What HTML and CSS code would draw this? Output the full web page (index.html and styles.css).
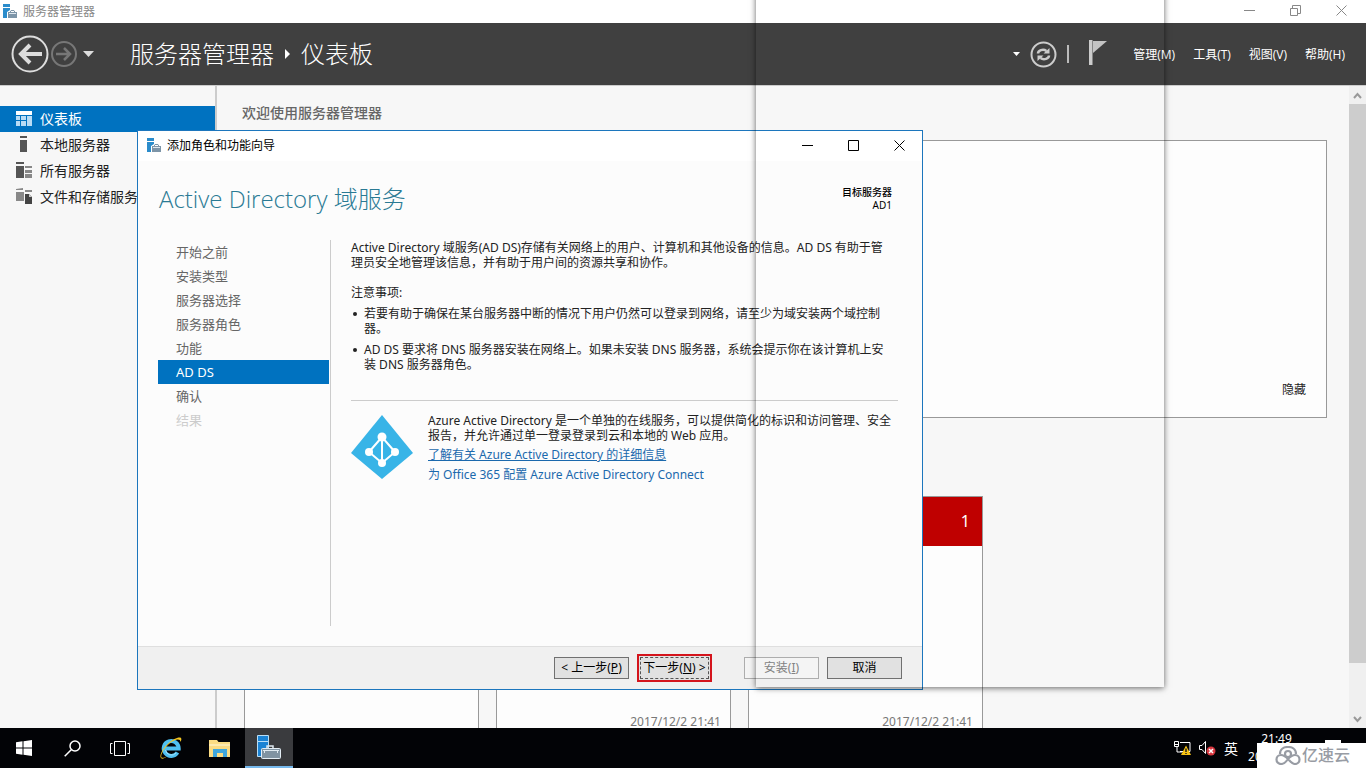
FILE: index.html
```html
<!DOCTYPE html>
<html lang="zh-CN">
<head>
<meta charset="utf-8">
<title>服务器管理器</title>
<link rel="stylesheet" href="styles.css">
</head>
<body>
<svg class="defs" aria-hidden="true">
  <symbol id="srv" viewBox="0 0 15 15">
    <path fill="#2b8ccb" d="M0 0h7v3H0zM0 4h7v2L4 8v6H0z"/>
    <path fill="none" stroke="#7d95a8" d="M7 8.500l1-2h3l1 2"/>
    <path fill="#7d95a8" d="M5 8h9v6H5z"/>
    <path fill="#dde6ee" d="M6 9h7v1H6z"/>
  </symbol>
</svg>
<div class="desktop">
  <header class="titlebar">
    <svg class="app-icon" width="15" height="15"><use href="#srv"/></svg>
    <span class="app-title">服务器管理器</span>
    <div class="win-controls win-controls-main">
      <button aria-label="最小化"><svg width="11" height="11"><path d="M0 5.500h11"/></svg></button>
      <button aria-label="还原"><svg width="11" height="11"><path d="M.5 3.500h7v7h-7zM2.500 3.500v-3h8v8h-3"/></svg></button>
      <button aria-label="关闭"><svg width="11" height="11"><path d="M.5.5l10 10M10.500.5l-10 10"/></svg></button>
    </div>
  </header>

  <div class="banner">
    <div class="history">
      <button aria-label="后退"><svg width="38" height="38"><circle cx="19" cy="19" r="17.500" fill="none" stroke="#ddd" stroke-width="2"/><path d="M31 19H10M19 10l-9 9 9 9" fill="none" stroke="#ddd" stroke-width="4"/></svg></button>
      <button aria-label="前进"><svg width="27" height="27"><circle cx="13" cy="13" r="12" fill="none" stroke="#777" stroke-width="2"/><path d="M5 13h14M13 7l6 6-6 6" fill="none" stroke="#777" stroke-width="2.500"/></svg></button>
      <button aria-label="历史记录"><svg width="11" height="6"><path d="M0 0h11L5.500 6z" fill="#ddd"/></svg></button>
    </div>
    <h1 class="crumbs"><span>服务器管理器</span><svg width="5" height="10"><path d="M0 0l5 5-5 5z" fill="#fff"/></svg><span>仪表板</span></h1>
    <div class="tools">
      <button aria-label="更多"><svg width="7" height="4"><path d="M0 0h7L3.500 4z" fill="#fff"/></svg></button>
      <button aria-label="刷新"><svg width="27" height="27"><circle cx="13.500" cy="13.500" r="12" fill="none" stroke="#ccc" stroke-width="2"/><path d="M8 12.500c0-3 5-5 8.500-2.500M19 14.500c0 3-5 5-8.500 2.500" fill="none" stroke="#ccc" stroke-width="2.500"/><path d="M13.500 12.500h6V7zM13.500 14.500h-6V20z" fill="#ccc"/></svg></button>
      <span class="rule"></span>
      <button aria-label="通知" class="flag"><svg width="18" height="25"><path d="M0 0h3.500v25H0z" fill="#ccc"/><path d="M4 1h14L4 13z" fill="#c4c4c4"/></svg></button>
      <nav class="menus"><button>管理(M)</button><button>工具(T)</button><button>视图(V)</button><button>帮助(H)</button></nav>
    </div>
  </div>

  <div class="workspace">
    <nav class="sidebar">
      <a href="#dash" class="current"><svg width="16" height="15" fill="#fff"><path d="M0 0h16v4H0z"/><path fill="#b9dcf5" d="M0 5h4v4H0zM0 10h4v5H0zM5 5h5v4H5zM5 10h5v5H5zM11 5h5v10h-5z"/></svg>仪表板</a>
      <a href="#local"><svg width="16" height="16" fill="#555"><path d="M4 0h7v2H4zM4 4h7v12H4z"/></svg>本地服务器</a>
      <a href="#all"><svg width="16" height="16"><path d="M0 0h8v2H0zM0 4h8v12H0z" fill="#555"/><path d="M9 4h7v2H9zM9 8h7v3H9zM9 12h7v4H9z" fill="#888"/></svg>所有服务器</a>
      <a href="#files"><svg width="16" height="16"><path d="M0 1l7-1v2H0zM0 4h8v9H0zM9 2h7v2H9z" fill="#888"/><path d="M9 6h4l3 3v7H9z" fill="#444"/><path d="M13 6l3 3h-3z" fill="#ccc"/></svg>文件和存储服务</a>
    </nav>
    <main class="dashboard">
      <h2>欢迎使用服务器管理器</h2>
      <section class="welcome"><button>隐藏</button></section>
      <div class="tiles">
        <article class="tile"></article>
        <article class="tile"><time>2017/12/2 21:41</time></article>
        <article class="tile"><div class="alert">1</div><time>2017/12/2 21:41</time></article>
      </div>
    </main>
    <div class="scrollbar">
      <svg width="9" height="18"><path d="M1 12l3.500-4L8 12"/></svg>
      <div class="thumb"></div>
      <svg width="9" height="18"><path d="M1 7l3.500 4L8 7"/></svg>
    </div>
  </div>

  <footer class="taskbar">
    <button aria-label="开始"><svg width="16" height="16" fill="#fff"><path d="M0 2.200l6.500-.9v6.200H0zM7.500 1.200L16 0v7.500H7.500zM0 8.500h6.500v6.200L0 13.800zM7.500 8.500H16V16l-8.500-1.200z"/></svg></button>
    <button aria-label="搜索"><svg width="17" height="17" fill="none" stroke="#fff" stroke-width="1.500"><circle cx="11" cy="6" r="5"/><path d="M7.500 9.500L.7 16.300"/></svg></button>
    <button aria-label="任务视图"><svg width="20" height="15" fill="none" stroke="#fff"><path d="M4.500.5h11v14h-11zM2.500 2.500h-2v10h2M17.500 2.500h2v10h-2"/></svg></button>
    <div class="pinned">
      <button aria-label="Internet Explorer"><svg width="24" height="24"><path d="M18.500 16.500A7.500 7.500 0 1 1 19.700 12.500H6" fill="none" stroke="#4fc0f0" stroke-width="4"/><path d="M17 17a6 6 0 0 1-10.500-3" fill="none" stroke="#a8e4fb" stroke-width="1"/><path d="M2 22C-1 19 8 5 18 2c5-1.500 5 1 3.500 4C21.500 2 16 3 11 7 5 12 1 19 2.500 21.500c1 .8 3 .2 5-1C5.500 22.500 3 23.300 2 22z" fill="#f5c722"/></svg></button>
      <button aria-label="文件资源管理器"><svg width="22" height="19"><path d="M0 1h8l1.500 2H21v15H0z" fill="#fbdc83"/><path d="M0 5h21v2H0z" fill="#fdeab0"/><path d="M4 18v-8h14v8h-4v-4H8v4z" fill="#3ea6dc"/></svg></button>
      <button aria-label="服务器管理器" class="running"><svg width="24" height="24"><path d="M.5.500h11v6H.5zM.5 6.500h11v15H.5z" fill="#1b83d4" stroke="#b9def7"/><path d="M10 13v-2h6v2" fill="none" stroke="#dfe9f0" stroke-width="1.500"/><rect x="4.500" y="13.500" width="19" height="10" rx="1" fill="#8093a2" stroke="#e3edf4"/><path d="M6 15.500h16M7.500 15v3M20.500 15v3" stroke="#dfe9f0"/></svg></button>
    </div>
    <div class="tray">
      <svg width="17" height="15"><path d="M.5.500h4v5h-4zM6 1.500h10v9H6M3 6v5h5" fill="none" stroke="#fff"/><path d="M1 3.500h3" stroke="#fff"/><path d="M12 4.500L17 14H7z" fill="#f8c313"/><path d="M12 7.500v3.500M12 12v1" stroke="#222" stroke-width="1.500"/></svg>
      <svg width="17" height="15"><path d="M.5 4.500h2.500l3.500-4v12l-3.500-4H.5z" fill="none" stroke="#fff"/><circle cx="12" cy="10" r="4.500" fill="#d7373f"/><path d="M10 8l4 4M14 8l-4 4" stroke="#fff" stroke-width="1.500"/></svg>
      <span class="ime">英</span>
      <div class="clock"><span>21:49</span><span>2017/12/2</span></div>
      <svg width="16" height="16"><path d="M0 0h16v13h-5v3l-3-3H0z" fill="#fff"/></svg>
    </div>
  </footer>

  <section class="wizard" role="dialog" aria-labelledby="wizard-title">
    <header class="wizard-bar">
      <svg width="15" height="15"><use href="#srv"/></svg>
      <span id="wizard-title">添加角色和功能向导</span>
      <div class="win-controls">
        <button aria-label="最小化"><svg width="11" height="11"><path d="M0 5.500h11"/></svg></button>
        <button aria-label="最大化"><svg width="11" height="11"><path d="M.5.500h10v10H.5z"/></svg></button>
        <button aria-label="关闭"><svg width="11" height="11"><path d="M.5.5l10 10M10.500.5l-10 10"/></svg></button>
      </div>
    </header>
    <div class="wizard-head">
      <h2>Active Directory 域服务</h2>
      <p><strong>目标服务器</strong><br>AD1</p>
    </div>
    <div class="wizard-body">
      <nav class="steps">
        <a href="#s1">开始之前</a><a href="#s2">安装类型</a><a href="#s3">服务器选择</a><a href="#s4">服务器角色</a><a href="#s5">功能</a><a href="#s6" class="current">AD DS</a><a href="#s7">确认</a><a href="#s8" class="off">结果</a>
      </nav>
      <div class="page">
        <p>Active Directory 域服务(AD DS)存储有关网络上的用户、计算机和其他设备的信息。AD DS 有助于管<br>理员安全地管理该信息，并有助于用户间的资源共享和协作。</p>
        <h3>注意事项:</h3>
        <ul>
          <li>若要有助于确保在某台服务器中断的情况下用户仍然可以登录到网络，请至少为域安装两个域控制<br>器。</li>
          <li>AD DS 要求将 DNS 服务器安装在网络上。如果未安装 DNS 服务器，系统会提示你在该计算机上安<br>装 DNS 服务器角色。</li>
        </ul>
        <div class="azure">
          <svg width="62" height="66"><path d="M31 2l31 38-31 26L0 40z" fill="#38b4e7"/><path d="M31 24L18 39l13 11 13-11zM31 24v26" fill="none" stroke="#fff" stroke-width="2"/><g fill="#fff"><circle cx="31" cy="24" r="4.500"/><circle cx="18" cy="39" r="4"/><circle cx="44" cy="39" r="4"/><circle cx="31" cy="50" r="4"/></g></svg>
          <div>
            <p>Azure Active Directory 是一个单独的在线服务，可以提供简化的标识和访问管理、安全<br>报告，并允许通过单一登录登录到云和本地的 Web 应用。</p>
            <a href="#more" class="underlined">了解有关 Azure Active Directory 的详细信息</a>
            <a href="#connect">为 Office 365 配置 Azure Active Directory Connect</a>
          </div>
        </div>
      </div>
    </div>
    <footer class="wizard-foot">
      <button>&lt; 上一步(<u>P</u>)</button>
      <button class="next">下一步(<u>N</u>) &gt;</button>
      <button class="install" disabled>安装(<u>I</u>)</button>
      <button>取消</button>
    </footer>
  </section>

  <div class="ghost"></div>
  <div class="watermark">
    <svg width="26" height="19" fill="none" stroke="#989ca4" stroke-width="2.200"><path d="M5 8C5 3 9 1 13 1s8 2 8 7"/><path d="M13 13c-2 3-4 5-7 5-6 0-6-9 0-9 3 0 5 2 7 4s4 5 7 5c6 0 6-9 0-9-3 0-5 2-7 4z"/><circle cx="13" cy="8" r="3"/></svg>
    <span>亿速云</span>
  </div>
</div>
</body>
</html>
```
FILE: styles.css
```css
* { box-sizing: border-box; }
body, h1, h2, h3, p, ul { margin: 0; padding: 0; }
body {
  font: 12px/15px "Noto Sans", "Noto Sans CJK SC", sans-serif;
  color: #222;
}
button {
  margin: 0;
  padding: 0;
  border: 0;
  background: none;
  font: inherit;
  color: inherit;
}
a { color: inherit; text-decoration: none; }
svg { flex: none; display: block; }
.defs { position: absolute; width: 0; height: 0; }

.desktop {
  position: relative;
  display: flex;
  flex-direction: column;
  height: 100vh;
  overflow: hidden;
  background: #f7f7f7;
}

/* Main window title bar */
.titlebar {
  display: flex;
  align-items: center;
  gap: 5px;
  height: 23px;
  padding-left: 3px;
  background: #fff;
  color: #888;
}
.win-controls { display: flex; margin-left: auto; }
.win-controls button {
  display: flex;
  align-items: center;
  justify-content: center;
  width: 46px;
  height: 28px;
}
.win-controls svg { fill: none; stroke: #000; }
.win-controls-main button { height: 20px; padding: 0 4px 2px 0; }
.win-controls-main svg { stroke: #888; }

/* Dark banner */
.banner {
  display: flex;
  align-items: center;
  height: 62px;
  padding: 0 21px 0 11px;
  background: #404040;
  color: #fff;
}
.history { display: flex; align-items: center; gap: 2px; width: 119px; }
.history button:last-child { margin-left: 3px; }
.crumbs {
  display: flex;
  align-items: center;
  gap: 11px;
  font-size: 24px;
  line-height: 32px;
  font-weight: 300;
}
.tools { display: flex; align-items: center; margin-left: auto; gap: 10px; }
.rule { width: 2px; height: 18px; background: #bbb; }
.flag { margin: 0 16px 4px 10px; }
.menus { display: flex; gap: 18px; font-family: "Open Sans", "Noto Sans CJK SC", sans-serif; }

/* Workspace */
.workspace { display: flex; flex: 1; min-height: 0; border-top: 1px solid #ccc; }
.sidebar {
  flex: none;
  width: 217px;
  padding-top: 20px;
  border-right: 2px solid #ccc;
  font-size: 14px;
}
.sidebar a { display: flex; align-items: center; gap: 8px; height: 26px; padding: 0 0 2px 16px; }
.sidebar .current { background: #0072c0; color: #fff; }
.dashboard { flex: 1; padding: 16px 22px 0 27px; overflow: hidden; }
.dashboard h2 {
  margin-left: -2px;
  font-size: 14px;
  line-height: 22px;
  font-weight: 500;
  color: #666;
}
.welcome {
  display: flex;
  align-items: flex-end;
  justify-content: flex-end;
  height: 278px;
  margin: 16px 0 78px;
  padding: 0 20px 20px;
  border: 1px solid #999;
  background: #fdfdfd;
}
.tiles { display: flex; gap: 17px; }
.tile {
  display: flex;
  flex-direction: column;
  width: 235px;
  height: 260px;
  padding-bottom: 27px;
  border: 1px solid #999;
  background: #fdfdfd;
}
.tile time { margin: auto 9px 0 auto; line-height: 12px; color: #777; }
.alert {
  padding-right: 12px;
  background: #bf0000;
  color: #fff;
  font-size: 16px;
  line-height: 49px;
  text-align: right;
}
.scrollbar {
  display: flex;
  flex-direction: column;
  align-items: center;
  width: 17px;
  background: #f0f0f0;
}
.scrollbar svg { fill: none; stroke: #999; stroke-width: 2; }
.thumb { flex: none; width: 17px; height: 87%; margin-bottom: auto; background: #cdcdcd; }

/* Taskbar */
.taskbar { display: flex; height: 40px; background: #020306; color: #fff; }
.taskbar button { display: flex; align-items: center; justify-content: center; width: 48px; }
.pinned { display: flex; gap: 1px; margin-left: 3px; }
.taskbar .running { background: #3a3b3e; border-bottom: 2px solid #76b9ed; }
.tray { display: flex; align-items: center; gap: 8px; margin-left: auto; padding-right: 25px; }
.ime { font-size: 14px; }
.clock { display: flex; flex-direction: column; align-items: center; line-height: 18px; margin: 0 12px 0 2px; }

/* Wizard window */
.wizard {
  position: absolute;
  left: 137px;
  top: 130px;
  display: flex;
  flex-direction: column;
  width: 786px;
  min-height: 560px;
  border: 1px solid #1c76bd;
  background: #fcfcfc;
}
.wizard-bar { display: flex; align-items: center; gap: 5px; height: 30px; padding: 0 0 2px 9px; background: #fff; color: #000; }
.wizard-head {
  display: flex;
  align-items: center;
  justify-content: space-between;
  height: 79px;
  padding: 0 30px 4px 21px;
}
.wizard-head h2 {
  font: 300 24px/32px "Open Sans", "Noto Sans CJK SC", sans-serif;
  color: #2a7a94;
}
.wizard-head p { font-size: 10px; line-height: 13px; text-align: right; color: #000; }
.wizard-head strong { font-weight: 500; }
.wizard-body { display: flex; flex: 1; padding: 0 24px 20px 20px; }
.steps { flex: none; width: 173px; padding-right: 1px; border-right: 1px solid #ccc; font-size: 13px; line-height: 24px; color: #666; }
.steps a { display: block; padding-left: 18px; }
.steps .current { background: #0072c0; color: #fff; }
.steps .off { color: #ccc; }
.page { flex: 1; padding-left: 20px; white-space: nowrap; }
.page h3 { margin: 15px 0 6px; font-size: 12px; font-weight: 400; }
.page ul { padding-left: 13px; list-style: none; }
.page li { position: relative; margin-bottom: 6px; }
.page li::before {
  content: "";
  position: absolute;
  left: -11px;
  top: 6px;
  width: 4px;
  height: 4px;
  border-radius: 2px;
  background: #222;
}
.azure { display: flex; gap: 15px; margin-top: 28px; padding-top: 12px; border-top: 1px solid #ccc; }
.azure p { margin-bottom: 2px; }
.azure a { display: block; line-height: 20px; color: #1b69ad; }
.azure .underlined { text-decoration: underline; }
.wizard-foot {
  display: flex;
  align-items: center;
  justify-content: flex-end;
  gap: 8px;
  height: 43px;
  padding-right: 20px;
  border-top: 1px solid #dfdfdf;
  background: #f0f0f0;
}
.wizard-foot button {
  width: 75px;
  height: 22px;
  border: 1px solid #707070;
  background: #e1e1e1;
  line-height: 18px;
  white-space: nowrap;
  color: #000;
}
.wizard-foot .install { margin-left: 24px; border-color: #adadad; background: #f4f4f4; color: #838383; }
.wizard-foot .next {
  height: 28px;
  border: 2px solid #d4141c;
  outline: 1px dashed #555;
  outline-offset: -4px;
}

/* Shadow of a transparent window */
.ghost {
  position: absolute;
  left: 756px;
  top: -10px;
  width: 408px;
  height: 697px;
  box-shadow: 0 1px 6px rgba(0, 0, 0, 0.6);
  pointer-events: none;
}
.watermark {
  position: absolute;
  right: 0;
  bottom: 0;
  display: flex;
  align-items: center;
  gap: 1px;
  width: 109px;
  height: 25px;
  padding-left: 18px;
  background: #fff;
  color: #989ca4;
  font-size: 16px;
  font-weight: 500;
}
```
